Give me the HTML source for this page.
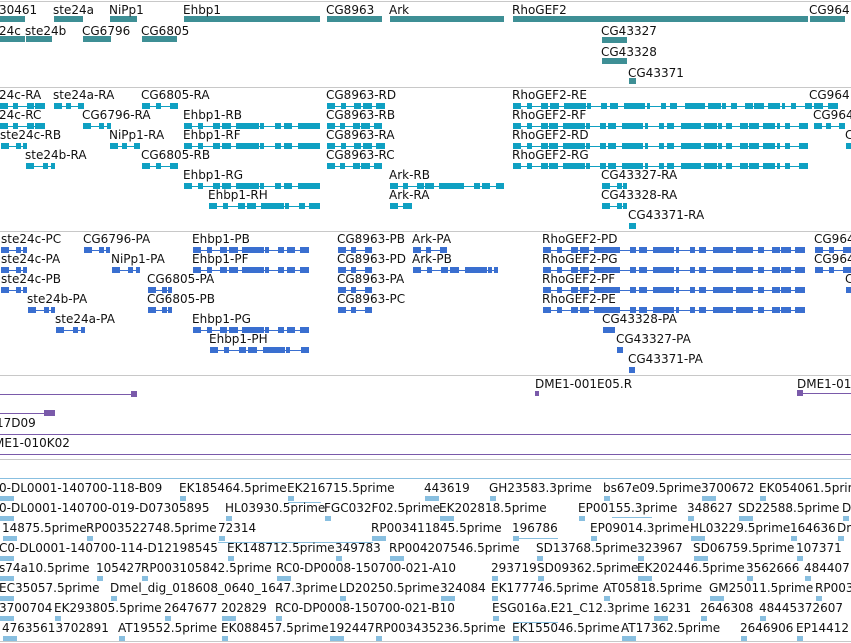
<!DOCTYPE html>
<html><head><meta charset="utf-8">
<style>
html,body{margin:0;padding:0;background:#fff;width:851px;height:643px;overflow:hidden;position:relative}
.t{position:absolute;font:12px "DejaVu Sans","Liberation Sans",sans-serif;line-height:14px;color:#111;white-space:nowrap}
.h{position:absolute;left:0;width:851px;height:1px;background:#c8c8c8}
svg{position:absolute;left:0;top:0}
</style></head><body>
<div class="h" style="top:1px"></div>
<div class="h" style="top:87px"></div>
<div class="h" style="top:231px"></div>
<div class="h" style="top:375px"></div>
<div class="h" style="top:459px"></div>
<div class="h" style="top:478px;background:#88bfe0"></div>
<div class="h" style="top:641px"></div>
<svg id="s" width="851" height="643"></svg>
<div id="L"></div>
<script>
var L=document.getElementById('L'),S=document.getElementById('s'),ns='http://www.w3.org/2000/svg';
function t(x,y,s){var d=document.createElement('div');d.className='t';d.style.left=x+'px';d.style.top=y+'px';d.textContent=s;L.appendChild(d);}
function r(x,y,w,h,c){var e=document.createElementNS(ns,'rect');e.setAttribute('x',x);e.setAttribute('y',y);e.setAttribute('width',w);e.setAttribute('height',h);e.setAttribute('fill',c);S.appendChild(e);}
function bar(x1,x2,cy,c){r(x1,cy-3,x2-x1,6,c);}
function tr(x1,x2,cy,c){r(x1,cy,x2-x1,1,c);var w=x2-x1;var k=Math.max(2,Math.round(w/12));
 for(var i=0;i<k;i++){var p=x1+Math.round(w*i/k+(i*37%5));var bw=Math.min(3+(i*13%11),x2-p);if(bw>0)r(p,cy-3,bw,6,c);} r(x1,cy-3,Math.min(8,w),6,c);r(x2-4,cy-3,4,6,c);}
var T='#3e8f95';
[[0,'30461',0,25],[54,'ste24a',54,83],[110,'NiPp1',110,137],[184,'Ehbp1',184,320],[327,'CG8963',327,382],[390,'Ark',390,504],[513,'RhoGEF2',513,808],[810,'CG964',810,845]].forEach(function(a){t(a[0]-1,3,a[1]);bar(a[2],a[3],19,T);});
[[0,'24c',0,25],[26,'ste24b',26,52],[83,'CG6796',83,111],[142,'CG6805',142,177]].forEach(function(a){t(a[0]-1,24,a[1]);bar(a[2],a[3],39,T);});
t(601,24,'CG43327');bar(602,627,40,T);t(601,45,'CG43328');bar(602,627,61,T);t(628,66,'CG43371');bar(629,636,81,T);
var B='#0fa0c2';
var r2=[[[0,'24c-RA',0,45],[54,'ste24a-RA',54,84],[142,'CG6805-RA',142,178],[327,'CG8963-RD',327,385],[513,'RhoGEF2-RE',513,838],[810,'CG964',0,0]],
[[0,'24c-RC',0,45],[83,'CG6796-RA',83,111],[184,'Ehbp1-RB',184,320],[327,'CG8963-RB',327,382],[513,'RhoGEF2-RF',513,808],[814,'CG964',814,845]],
[[1,'ste24c-RB',1,27],[110,'NiPp1-RA',110,140],[184,'Ehbp1-RF',184,320],[327,'CG8963-RA',327,385],[513,'RhoGEF2-RD',513,808],[846,'C',846,851]],
[[26,'ste24b-RA',26,55],[142,'CG6805-RB',142,178],[327,'CG8963-RC',327,382],[513,'RhoGEF2-RG',513,808]],
[[184,'Ehbp1-RG',184,320],[390,'Ark-RB',390,504],[602,'CG43327-RA',602,627]],
[[209,'Ehbp1-RH',209,320],[390,'Ark-RA',390,412],[602,'CG43328-RA',602,627]],
[[629,'CG43371-RA',629,636]]];
r2.forEach(function(row,i){row.forEach(function(a){t(a[0]-1,88+20*i,a[1]);if(a[3]>a[2])tr(a[2],a[3],106+20*i,B);});});
var P='#3a6fd0';
var r3=[[[2,'ste24c-PC',1,27],[84,'CG6796-PA',84,110],[193,'Ehbp1-PB',193,309],[338,'CG8963-PB',338,372],[413,'Ark-PA',413,447],[543,'RhoGEF2-PD',543,805],[815,'CG964',815,851]],
[[2,'ste24c-PA',1,27],[112,'NiPp1-PA',112,140],[193,'Ehbp1-PF',193,309],[338,'CG8963-PD',338,372],[413,'Ark-PB',413,498],[543,'RhoGEF2-PG',543,805],[815,'CG964',815,851]],
[[2,'ste24c-PB',1,27],[148,'CG6805-PA',148,172],[338,'CG8963-PA',338,372],[543,'RhoGEF2-PF',543,805],[846,'C',846,851]],
[[28,'ste24b-PA',28,55],[148,'CG6805-PB',148,172],[338,'CG8963-PC',338,372],[543,'RhoGEF2-PE',543,805]],
[[56,'ste24a-PA',56,85],[193,'Ehbp1-PG',193,309],[603,'CG43328-PA',603,615]],
[[210,'Ehbp1-PH',210,309],[617,'CG43327-PA',617,623]],
[[629,'CG43371-PA',629,635]]];
r3.forEach(function(row,i){row.forEach(function(a){t(a[0]-1,232+20*i,a[1]);tr(a[2],a[3],250+20*i,P);});});
var V='#7a5aaa';
t(535,377,'DME1-001E05.R');r(535,391,4,5,V);t(797,377,'DME1-01');r(797,393,54,1,V);r(797,390,6,6,V);
r(0,394,137,1,V);r(131,391,6,6,V);
r(0,413,55,1,V);r(44,410,11,6,V);
t(-4,416,'17D09');r(0,434,851,1,V);t(-6,436,'ME1-010K02');r(0,454,851,1,V);
var E='#88bfe0';
var rows=[
[[0,'0-DL0001-140700-118-B09'],[180,'EK185464.5prime'],[288,'EK216715.5prime'],[425,'443619'],[490,'GH23583.3prime'],[604,'bs67e09.5prime'],[702,'3700672'],[760,'EK054061.5prime']],
[[0,'0-DL0001-140700-019-D07305895'],[226,'HL03930.5prime'],[325,'FGC032F02.5prime'],[440,'EK202818.5prime'],[579,'EP00155.3prime'],[688,'348627'],[739,'SD22588.5prime'],[843,'D']],
[[3,'14875.5prime'],[87,'RP003522748.5prime'],[219,'72314'],[372,'RP003411845.5prime'],[513,'196786'],[591,'EP09014.3prime'],[691,'HL03229.5prime'],[791,'164636'],[838,'Dm']],
[[0,'C0-DL0001-140700-114-D12198545'],[228,'EK148712.5prime'],[336,'349783'],[390,'RP004207546.5prime'],[537,'SD13768.5prime'],[638,'323967'],[694,'SD06759.5prime'],[797,'107371']],
[[0,'s74a10.5prime'],[97,'105427'],[142,'RP003105842.5prime'],[277,'RC0-DP0008-150700-021-A10'],[492,'293719'],[538,'SD09362.5prime'],[638,'EK202446.5prime'],[747,'3562666'],[805,'484407']],
[[0,'EC35057.5prime'],[111,'Dmel_dig_018608_0640_1647.3prime'],[340,'LD20250.5prime'],[441,'324084'],[492,'EK177746.5prime'],[604,'AT05818.5prime'],[710,'GM25011.5prime'],[816,'RP003']],
[[0,'3700704'],[55,'EK293805.5prime'],[165,'2647677'],[222,'202829'],[276,'RC0-DP0008-150700-021-B10'],[493,'ESG016a.E21_C12.3prime'],[654,'16231'],[701,'2646308'],[760,'48445372607']],
[[3,'47635613702891'],[119,'AT19552.5prime'],[222,'EK088457.5prime'],[330,'192447'],[376,'RP003435236.5prime'],[513,'EK155046.5prime'],[622,'AT17362.5prime'],[741,'2646906'],[797,'EP14412']]];
rows.forEach(function(row,i){row.forEach(function(a,j){t(a[0]-1,481+20*i,a[1]);var x=Math.max(a[0],0);var w=(j*7+i*3)%3==0?14:6;r(x,496+20*i,w,5,E);});});
r(218,542,155,1,E);r(288,502,33,1,E);r(513,538,45,1,E);r(612,517,40,1,E);r(513,622,45,1,E);
</script>
</body></html>
